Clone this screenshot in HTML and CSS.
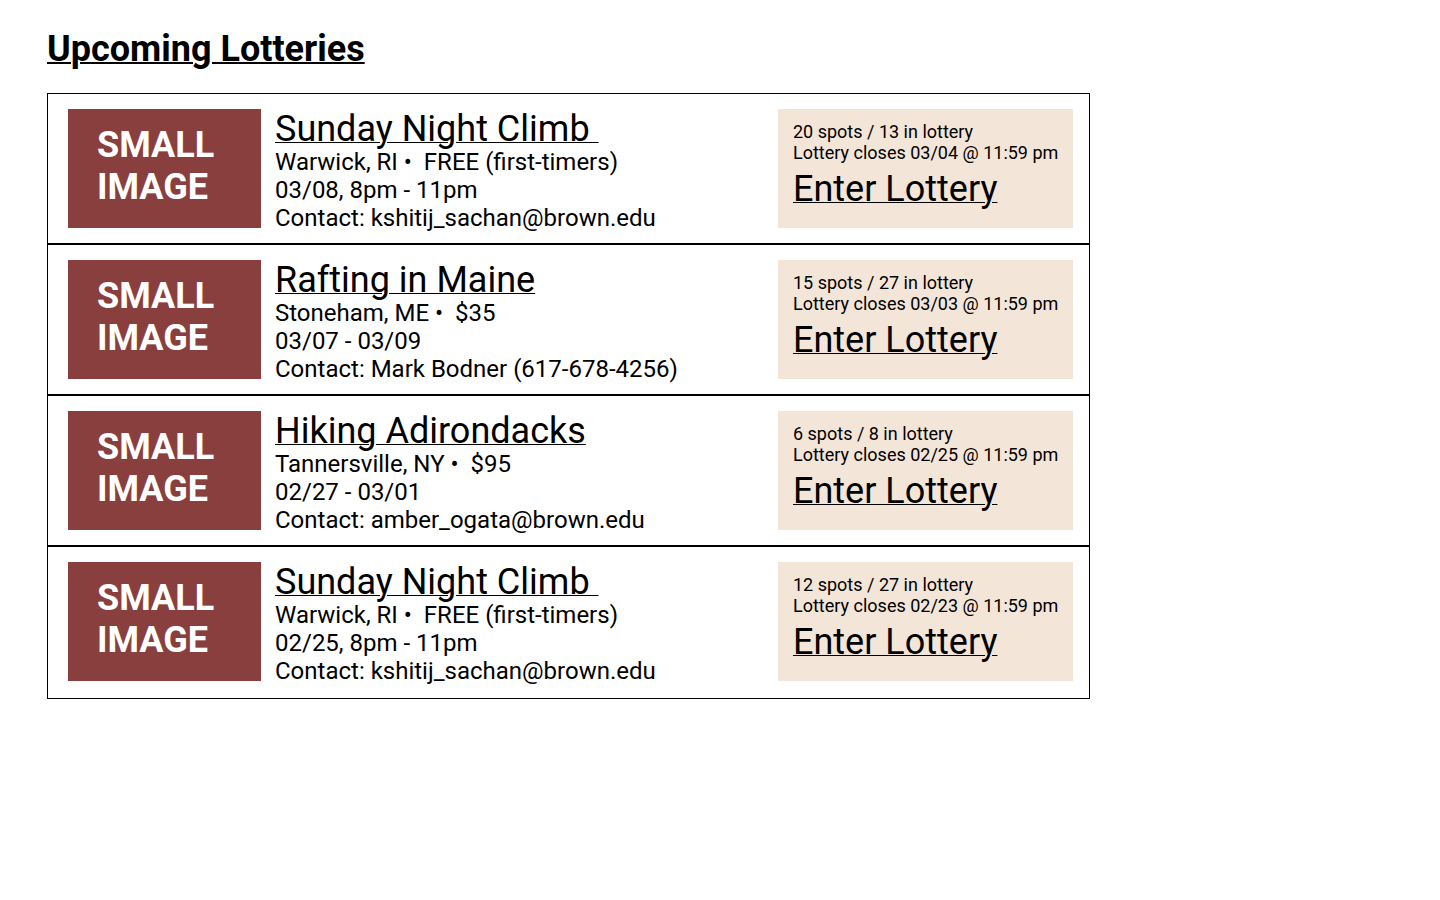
FILE: index.html
```html
<!DOCTYPE html>
<html>
<head>
<meta charset="utf-8">
<link rel="stylesheet" href="styles.css">
</head>
<body>
<div class="page">
  <h1 class="heading">Upcoming Lotteries</h1>
  <div class="list">
    <div class="row">
      <div class="thumb">SMALL<br>IMAGE</div>
      <div class="info">
        <a class="title" href="#">Sunday Night Climb </a>
        <div class="line">Warwick, RI •&nbsp; FREE (first-timers)</div>
        <div class="line">03/08, 8pm - 11pm</div>
        <div class="line">Contact: kshitij_sachan@brown.edu</div>
      </div>
      <div class="lottery">
        <div class="small">20 spots / 13 in lottery</div>
        <div class="small">Lottery closes 03/04 @ 11:59 pm</div>
        <a class="enter" href="#">Enter Lottery</a>
      </div>
    </div>
    <div class="row">
      <div class="thumb">SMALL<br>IMAGE</div>
      <div class="info">
        <a class="title" href="#">Rafting in Maine</a>
        <div class="line">Stoneham, ME •&nbsp; $35</div>
        <div class="line">03/07 - 03/09</div>
        <div class="line">Contact: Mark Bodner (617-678-4256)</div>
      </div>
      <div class="lottery">
        <div class="small">15 spots / 27 in lottery</div>
        <div class="small">Lottery closes 03/03 @ 11:59 pm</div>
        <a class="enter" href="#">Enter Lottery</a>
      </div>
    </div>
    <div class="row">
      <div class="thumb">SMALL<br>IMAGE</div>
      <div class="info">
        <a class="title" href="#">Hiking Adirondacks</a>
        <div class="line">Tannersville, NY •&nbsp; $95</div>
        <div class="line">02/27 - 03/01</div>
        <div class="line">Contact: amber_ogata@brown.edu</div>
      </div>
      <div class="lottery">
        <div class="small">6 spots / 8 in lottery</div>
        <div class="small">Lottery closes 02/25 @ 11:59 pm</div>
        <a class="enter" href="#">Enter Lottery</a>
      </div>
    </div>
    <div class="row">
      <div class="thumb">SMALL<br>IMAGE</div>
      <div class="info">
        <a class="title" href="#">Sunday Night Climb </a>
        <div class="line">Warwick, RI •&nbsp; FREE (first-timers)</div>
        <div class="line">02/25, 8pm - 11pm</div>
        <div class="line">Contact: kshitij_sachan@brown.edu</div>
      </div>
      <div class="lottery">
        <div class="small">12 spots / 27 in lottery</div>
        <div class="small">Lottery closes 02/23 @ 11:59 pm</div>
        <a class="enter" href="#">Enter Lottery</a>
      </div>
    </div>
  </div>
</div>
</body>
</html>
```
FILE: styles.css
```css
* { box-sizing: border-box; }
body {
  margin: 0;
  font-family: Roboto, "Liberation Sans", sans-serif;
  color: #000;
  background: #fff;
}
.page {
  padding: 28px 0 0 47px;
}
.heading {
  margin: 0 0 23px 0;
  font-size: 36px;
  font-weight: 700;
  line-height: 42px;
  text-decoration: underline;
  text-decoration-thickness: 2px;
}
.list {
  width: 1043px;
  border: 1px solid #000;
}
.row {
  display: flex;
  align-items: flex-start;
  padding: 15px 16px 11px 20px;
  border-bottom: 2px solid #000;
}
.row:last-child {
  border-bottom: none;
  padding-bottom: 13px;
}
.thumb {
  width: 193px;
  height: 119px;
  background: #8a3f3f;
  color: #fff;
  font-weight: 700;
  font-size: 36px;
  line-height: 42px;
  padding: 15px 0 0 29px;
  flex: none;
}
.info {
  flex: 1;
  margin-left: 14px;
  display: flex;
  flex-direction: column;
  align-items: flex-start;
}
.title {
  color: #000;
  font-size: 36px;
  line-height: 37px;
  padding-top: 2px;
  text-decoration: underline;
  text-decoration-thickness: from-font;
  white-space: pre;
}
.line {
  font-size: 24px;
  line-height: 28px;
}
.lottery {
  width: 295px;
  height: 119px;
  background: #f3e5d7;
  padding: 12px 15px 0 15px;
  flex: none;
}
.small {
  font-size: 18px;
  line-height: 21px;
  white-space: nowrap;
}
.enter {
  display: inline-block;
  margin-top: 6px;
  color: #000;
  font-size: 36px;
  line-height: 40px;
  text-decoration: underline;
  text-decoration-thickness: from-font;
}
```
